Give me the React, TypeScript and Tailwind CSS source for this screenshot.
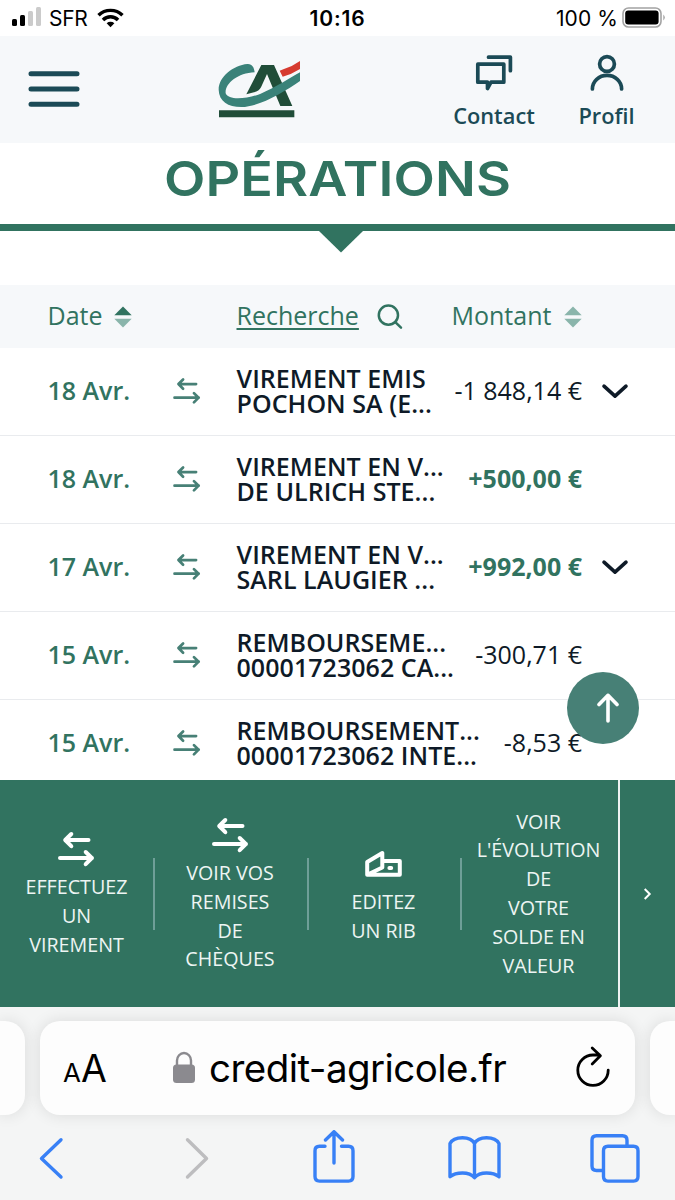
import type { ReactNode } from "react";

type Operation = {
	date: string;
	lines: [string, string];
	amount: string;
	credit?: boolean;
	expandable?: boolean;
};

const operations: Operation[] = [
	{
		date: "18 Avr.",
		lines: ["VIREMENT EMIS", "POCHON SA (E..."],
		amount: "-1 848,14 €",
		expandable: true,
	},
	{
		date: "18 Avr.",
		lines: ["VIREMENT EN V...", "DE ULRICH STE..."],
		amount: "+500,00 €",
		credit: true,
	},
	{
		date: "17 Avr.",
		lines: ["VIREMENT EN V...", "SARL LAUGIER ..."],
		amount: "+992,00 €",
		credit: true,
		expandable: true,
	},
	{
		date: "15 Avr.",
		lines: ["REMBOURSEME...", "00001723062 CA..."],
		amount: "-300,71 €",
	},
	{
		date: "15 Avr.",
		lines: ["REMBOURSEMENT...", "00001723062 INTE..."],
		amount: "-8,53 €",
	},
];

function TransferIcon({ className }: { className: string }) {
	return (
		<svg
			viewBox="0 0 45 45"
			className={className}
			fill="none"
			stroke="currentColor"
			strokeLinecap="round"
			strokeLinejoin="round"
		>
			<path d="M12 12H34.5M17.3 6L11.2 12l6.1 6.2M6 30H38M31.7 24l6.1 6-6.1 6.2" />
		</svg>
	);
}

function SortIcon({ active }: { active?: boolean }) {
	return (
		<svg viewBox="0 0 18 22" className="h-[22px] w-[18px]">
			<path d="M9 .5L17.7 9.3H.3z" fill={active ? "#317360" : "#8ab5ab"} />
			<path d="M9 21.5L.3 12.7h17.4z" fill="#8ab5ab" />
		</svg>
	);
}

function StatusBar() {
	return (
		<div className="grid h-9 grid-cols-3 items-center bg-white font-['Inter',sans-serif] text-[21px] text-black">
			<div className="flex items-center pl-3">
				<svg viewBox="0 0 30 20" className="mt-[-2px] h-5 w-[30px]">
					<rect x="0" y="12" width="5" height="7" rx="1.5" />
					<rect x="8" y="8" width="5" height="11" rx="1.5" />
					<rect x="16" y="4" width="5" height="15" rx="1.5" fill="#cbcbcb" />
					<rect x="24" y="0" width="5" height="19" rx="1.5" fill="#cbcbcb" />
				</svg>
				<span className="ml-[7px] w-[39px] pt-px tracking-[-0.3px]">SFR</span>
				<svg
					viewBox="0 0 28 20"
					className="ml-[9px] h-5 w-[27px]"
					fill="none"
					stroke="black"
					strokeWidth="3.6"
				>
					<path d="M1.6 7.2a17.6 17.6 0 0 1 24.8 0M6.2 12a11 11 0 0 1 15.6 0" />
					<path d="M14 19.6l-4-4.2a6 6 0 0 1 8 0z" fill="black" stroke="none" />
				</svg>
			</div>
			<div className="pt-px text-center font-semibold tracking-[0.9px]">10:16</div>
			<div className="flex items-center justify-end pr-[9px]">
				<span className="pt-px tracking-[0.1px]">100 %</span>
				<svg viewBox="0 0 44 21" className="mt-[-2px] ml-1 h-[21px] w-11">
					<rect
						x="1"
						y="1"
						width="38"
						height="19"
						rx="5.5"
						fill="none"
						stroke="#a3a3a3"
						strokeWidth="1.6"
					/>
					<rect x="3.2" y="3.4" width="33.4" height="14.2" rx="3" />
					<path d="M41.3 7.5q3 3 0 6z" fill="#a3a3a3" />
				</svg>
			</div>
		</div>
	);
}

function Logo() {
	return (
		<svg viewBox="654 180 249 177" className="h-[59px] w-[83px]">
			<path
				d="M784 195H822L877 318H841L801 222 783 262Q777 274 762 277L739 283Z"
				fill="#204d38"
			/>
			<path
				d="M764 217C762 202 757 191 742 192C700 196 656 230 656 269C657 304 684 321 724 321C780 320 850 277 900 243V217C860 239 830 261 782 281C745 296 685 303 677 280C674 252 712 219 764 217Z"
				fill="#3a8279"
			/>
			<path d="M839 212L850 208Q878 199 900 183V207Q875 223 848 230Z" fill="#d63b30" />
			<path d="M657 331H883V352H657Z" fill="#204d38" />
		</svg>
	);
}

function Header() {
	return (
		<header className="flex h-[107px] bg-[#f6f8fa] text-[#1b4a56]">
			<svg
				viewBox="0 0 52 36"
				className="mt-[35px] ml-7 h-9 w-[52px] shrink-0"
				stroke="currentColor"
				strokeWidth="5"
				strokeLinecap="round"
			>
				<path d="M3 2.7H49M3 18H49M3 33.3H49" />
			</svg>
			<div className="mt-6 ml-[138px] w-[236px]">
				<Logo />
			</div>
			<div className="flex gap-[45px] font-['Open_Sans',sans-serif] text-[21.8px] leading-[30px] font-[550]">
				<div className="flex w-20 flex-col items-center pt-[18px]">
					<svg
						viewBox="0.5 0 38 38"
						className="h-[38px] w-[38px]"
						fill="none"
						stroke="currentColor"
						strokeWidth="3.7"
						strokeLinecap="round"
						strokeLinejoin="round"
					>
						<path d="M3.3 10.2H29.3V28.2H16.5L13 34.5V28.2H3.3Z" />
						<path d="M14 3.2H35.9V16.7" />
					</svg>
					<span className="mt-[9px]">Contact</span>
				</div>
				<div className="flex w-[55px] flex-col items-center pt-[18px]">
					<svg
						viewBox="0 0 38 38"
						className="h-[38px] w-[38px]"
						fill="none"
						stroke="currentColor"
						strokeWidth="3.7"
						strokeLinecap="round"
					>
						<circle cx="19" cy="10" r="7.4" />
						<path d="M4.4 35A14.6 13.6 0 0 1 33.6 35" />
					</svg>
					<span className="mt-[9px]">Profil</span>
				</div>
			</div>
		</header>
	);
}

function OperationRow({ operation }: { operation: Operation }) {
	return (
		<div className="flex h-[88.1px] shrink-0 items-center border-b-[1.5px] border-[#e9ebee] pb-[2px] pl-[47.5px] text-[25px]">
			<span className="w-[122px] font-[570] text-[#317360]">
				{operation.date}
			</span>
			<div className="w-[67px] pt-[3px]">
				<TransferIcon className="h-[34px] w-[34px] stroke-[3.6] text-[#478076]" />
			</div>
			<p className="min-w-0 flex-1 pt-px leading-[25.2px] font-[570] tracking-[0.05px] whitespace-nowrap">
				{operation.lines[0]}
				<br />
				{operation.lines[1]}
			</p>
			<span
				className={
					operation.credit
						? "shrink-0 font-bold whitespace-nowrap text-[#317360]"
						: "shrink-0 whitespace-nowrap"
				}
			>
				{operation.amount}
			</span>
			<div className="w-[93px] shrink-0 pl-[19px]">
				{operation.expandable && (
					<svg
						viewBox="0 0 28 18"
						className="h-[18px] w-7"
						fill="none"
						stroke="currentColor"
						strokeWidth="3.6"
						strokeLinecap="round"
						strokeLinejoin="round"
					>
						<path d="M3 4.2L14 14.2 25 4.2" />
					</svg>
				)}
			</div>
		</div>
	);
}

function Operations() {
	return (
		<section className="h-[637px] overflow-hidden bg-white font-['Open_Sans',sans-serif] text-[#0e1a27]">
			<h1 className="flex h-[81px] scale-x-[1.11] justify-center pt-[6px] font-['Inter',sans-serif] text-[48.5px] leading-[60px] font-semibold tracking-[0.1px] text-[#317360]">
				OPÉRATIONS
			</h1>
			<div className="h-[7px] bg-[#317360]" />
			<svg viewBox="0 0 44 22" className="ml-[319px] h-[22px] w-11">
				<path d="M0 0H44L22 21.5Z" fill="#317360" />
			</svg>
			<div className="mt-8 flex h-[63px] items-center bg-[#f6f8fa] pl-[47.5px] text-[25px] text-[#317360]">
				<div className="flex w-[189px] items-center gap-3">
					<span className="pb-0.5">Date</span>
					<SortIcon active />
				</div>
				<div className="flex w-[215px] items-center gap-[17px]">
					<span className="pb-0.5 underline decoration-2 underline-offset-[3px]">
						Recherche
					</span>
					<svg
						viewBox="0 0 28 28"
						className="h-7 w-7"
						fill="none"
						stroke="currentColor"
						strokeWidth="2.5"
						strokeLinecap="round"
					>
						<circle cx="12.4" cy="12.2" r="9.6" />
						<path d="M19.3 19.1L25 24.6" />
					</svg>
				</div>
				<div className="flex items-center gap-[13px]">
					<span className="pb-0.5">Montant</span>
					<SortIcon />
				</div>
			</div>
			{operations.map((operation, index) => (
				<OperationRow key={index} operation={operation} />
			))}
		</section>
	);
}

function Shortcut({ lines, icon }: { lines: string[]; icon?: ReactNode }) {
	return (
		<div className="flex flex-col items-center justify-center pt-px text-center">
			{icon}
			{lines.map((line) => (
				<span key={line} className="whitespace-nowrap">
					{line}
				</span>
			))}
		</div>
	);
}

function Divider() {
	return <div className="h-[72px] w-[1.5px] self-center bg-[#6f9f98]" />;
}

function Shortcuts() {
	return (
		<nav className="flex h-[227px] bg-[#317360] font-['Open_Sans',sans-serif] text-[19.7px] leading-[28.8px] text-[#edf5f3]">
			<div className="grid w-[618px] grid-cols-[153px_0px_154px_0px_153px_0px_157px]">
				<Shortcut
					icon={<TransferIcon className="h-[45px] w-[45px] stroke-[4] text-white" />}
					lines={["EFFECTUEZ", "UN", "VIREMENT"]}
				/>
				<Divider />
				<Shortcut
					icon={<TransferIcon className="h-[45px] w-[45px] stroke-[4] text-white" />}
					lines={["VOIR VOS", "REMISES", "DE", "CHÈQUES"]}
				/>
				<Divider />
				<Shortcut
					icon={
						<svg
							viewBox="0 0 45 45"
							className="h-[45px] w-[45px]"
							fill="none"
							stroke="white"
							strokeWidth="4"
							strokeLinejoin="round"
							strokeLinecap="round"
						>
							<path d="M6.2 31.8V19L21.3 10V24.5L6.2 31.8H38.8V18H22" />
							<path d="M28.4 25H30.2" />
						</svg>
					}
					lines={["EDITEZ", "UN RIB"]}
				/>
				<Divider />
				<Shortcut
					lines={["VOIR", "L'ÉVOLUTION", "DE", "VOTRE", "SOLDE EN", "VALEUR"]}
				/>
			</div>
			<div className="flex flex-1 items-center justify-center border-l-2 border-[#eef3f2]">
				<svg
					viewBox="0 0 8 12"
					className="h-3 w-2"
					fill="none"
					stroke="white"
					strokeWidth="2"
				>
					<path d="M.7 1L5.7 6l-5 5" />
				</svg>
			</div>
		</nav>
	);
}

function AddressBar() {
	return (
		<div className="flex h-[94px] justify-between">
			<div className="w-[25px] rounded-r-[20px] bg-[#fdfdfd] shadow-[0_0_16px_rgba(0,0,0,0.11)]" />
			<div className="flex w-[595px] items-center rounded-[20px] bg-[#fdfdfd] pr-6 pl-[23px] text-black shadow-[0_0_16px_rgba(0,0,0,0.11)]">
				<div className="flex w-[110px] items-baseline pt-[3px]">
					<span className="text-[26px]">A</span>
					<span className="text-[37.5px] tracking-tight">A</span>
				</div>
				<svg viewBox="0 0 22 32" className="mt-[-3px] h-8 w-[22px]">
					<path
						d="M4 15V9.5a7 7.5 0 0 1 14 0V15"
						fill="none"
						stroke="#8b8a8f"
						strokeWidth="2.4"
					/>
					<rect y="13.5" width="22" height="18.5" rx="3.5" fill="#8b8a8f" />
				</svg>
				<span className="ml-[14px] w-[300px] pt-[2px] text-[38.5px] tracking-[-0.55px] whitespace-nowrap">
					credit-agricole.fr
				</span>
				<svg
					viewBox="0 0 36 42"
					className="mt-[-3px] ml-auto h-[42px] w-9"
					fill="none"
					stroke="black"
					strokeWidth="2.8"
					strokeLinecap="round"
					strokeLinejoin="round"
				>
					<path d="M33.2 24.2A15.2 15.2 0 1 1 18 9H24.5M17.2 2L25.4 9.8 17.2 18" />
				</svg>
			</div>
			<div className="w-[25px] rounded-l-[20px] bg-[#fdfdfd] shadow-[0_0_16px_rgba(0,0,0,0.11)]" />
		</div>
	);
}

function ToolbarIcon({ d, muted }: { d: string; muted?: boolean }) {
	return (
		<svg
			viewBox="0 0 56 56"
			className="h-14 w-14"
			fill="none"
			stroke={muted ? "#bdbdbf" : "#3880f6"}
			strokeWidth="3.4"
			strokeLinecap="round"
			strokeLinejoin="round"
		>
			<path d={d} />
		</svg>
	);
}

function SafariBar() {
	return (
		<footer className="h-[193px] overflow-hidden bg-[#f4f5f5] pt-[14px] font-['Inter',sans-serif]">
			<AddressBar />
			<div className="mt-[15px] grid grid-cols-[103px_187px_88px_193px_87px] justify-items-center">
				<ToolbarIcon d="M37 9.8L17.5 28.5 37 47" />
				<ToolbarIcon d="M18.5 9.8L37.5 28.5 18.5 47" muted />
				<ToolbarIcon d="M19 16.3H13.5Q9 16.3 9 20.8V46.6Q9 51.1 13.5 51.1H42.5Q47 51.1 47 46.6V20.8Q47 16.3 42.5 16.3H35.5M28 33V2M19.5 10L28 1.7 36.5 10" />
				<ToolbarIcon d="M27.5 13.5Q24.5 7.7 15.5 7.7Q6 7.7 3 13.5V46.8Q7.5 43 15.5 43Q23.5 43 27.5 47.6Q31.5 43 39.5 43Q47.5 43 52 46.8V13.5Q49 7.7 39.5 7.7Q30.5 7.7 27.5 13.5V47.6" />
				<ToolbarIcon d="M15.5 40.5H9.5Q5 40.5 5 36V10.3Q5 5.8 9.5 5.8H35.5Q40 5.8 40 10.3V16.3M21 16.3H46.5Q51 16.3 51 20.8V46.6Q51 51.1 46.5 51.1H21Q16.5 51.1 16.5 46.6V20.8Q16.5 16.3 21 16.3Z" />
			</div>
		</footer>
	);
}

export default function App() {
	return (
		<div className="relative h-[1200px] w-[675px] overflow-hidden bg-white">
			<StatusBar />
			<Header />
			<Operations />
			<Shortcuts />
			<SafariBar />
			<button
				type="button"
				className="absolute top-[672px] left-[567px] flex h-[72px] w-[72px] items-center justify-center rounded-full bg-[#478076] pl-[10px]"
			>
				<svg
					viewBox="0 0 24 30"
					className="h-[30px] w-6"
					fill="none"
					stroke="white"
					strokeWidth="3.6"
					strokeLinecap="round"
					strokeLinejoin="round"
				>
					<path d="M12 28V2.3M3 11.5L12 2.3 21 11.5" />
				</svg>
			</button>
		</div>
	);
}
